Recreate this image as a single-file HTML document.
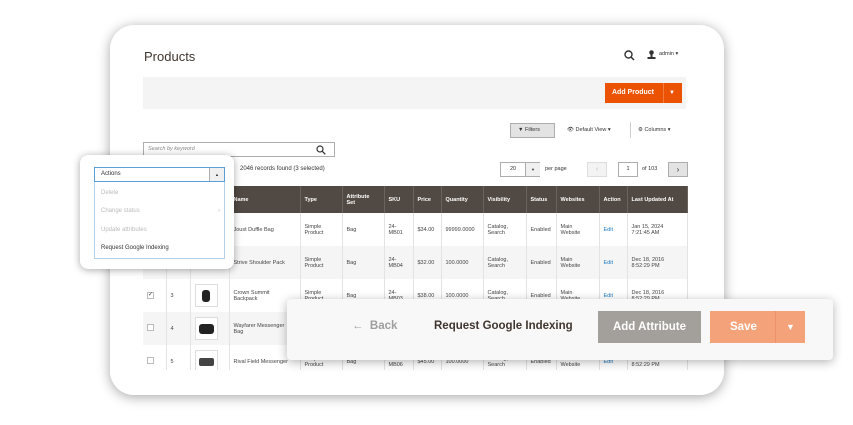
<!DOCTYPE html>
<html><head><meta charset="utf-8"><style>
*{box-sizing:border-box;margin:0;padding:0}
body{width:853px;height:425px;background:#fff;position:relative;overflow:hidden;font-family:"Liberation Sans",sans-serif;color:#333}
.abs{position:absolute}
.card{left:110px;top:25px;width:614px;height:370px;border-radius:24px;background:#fff;box-shadow:0 2px 12px rgba(0,0,0,.35);overflow:hidden}
table{border-collapse:collapse;position:absolute;left:143px;top:186px;font-size:5.5px;color:#444}
td,th{border-right:1px solid #e3e3e3;padding:0 4px;text-align:left;vertical-align:middle}
th{background:#514943;color:#fff;height:27px;font-weight:bold;border-right:1px solid #6a625c}
tr.r td{height:33px}
tr.r:nth-child(odd) td{background:#f5f5f5}
.cb{width:7px;height:7px;border:1px solid #bbb;background:#fff;display:inline-block}
.th{width:23px;height:23px;border:1px solid #ddd;background:#fff;display:flex;align-items:center;justify-content:center}
.ed{color:#1979c3}
</style></head><body>
<div class="abs card"></div>
<div class="abs" style="left:144px;top:49px;font-size:13px;color:#41362f">Products</div>
<svg class="abs" style="left:624px;top:50px" width="11" height="11"><circle cx="4.5" cy="4.5" r="3.5" stroke="#333" stroke-width="1.4" fill="none"/><path d="M7 7l3 3" stroke="#333" stroke-width="1.5"/></svg>
<svg class="abs" style="left:647px;top:50px" width="9" height="9"><circle cx="4.5" cy="2.5" r="2.3" fill="#333"/><rect x="3.5" y="4" width="2" height="3" fill="#333"/><rect x="0.5" y="7" width="8" height="2" fill="#333"/></svg>
<div class="abs" style="left:659px;top:51px;font-size:5.5px">admin ▾</div>
<div class="abs" style="left:143px;top:77px;width:543px;height:32px;background:#f4f4f4"></div>
<div class="abs" style="left:605px;top:83px;width:77px;height:20px;background:#eb5202;color:#fff;font-size:7px;font-weight:bold;line-height:20px;padding-left:7px">Add Product<span style="position:absolute;left:58px;top:0;width:1px;height:20px;background:#f47a3e"></span><span style="position:absolute;left:64px;font-size:6px">▼</span></div>
<div class="abs" style="left:510px;top:123px;width:45px;height:15px;background:#e3e3e3;border:1px solid #adadad;font-size:5.5px;line-height:13px;padding-left:7px">▼ Filters</div>
<div class="abs" style="left:567px;top:127px;font-size:5.5px">👁 Default View ▾</div>
<div class="abs" style="left:630px;top:122px;width:1px;height:16px;background:#ccc"></div>
<div class="abs" style="left:638px;top:127px;font-size:5.5px">⚙ Columns ▾</div>
<div class="abs" style="left:143px;top:142px;width:192px;height:15px;border:1px solid #adadad;font-size:5.5px;font-style:italic;color:#888;line-height:13px;padding-left:4px">Search by keyword</div>
<svg class="abs" style="left:316px;top:145px" width="10" height="10"><circle cx="4" cy="4" r="3" stroke="#333" stroke-width="1.2" fill="none"/><path d="M6.3 6.3l3 3" stroke="#333" stroke-width="1.3"/></svg>
<div class="abs" style="left:240px;top:166px;font-size:6px">2046 records found (3 selected)</div>
<div class="abs" style="left:500px;top:162px;width:40px;height:15px;border:1px solid #adadad;font-size:5.5px;line-height:13px;padding-left:9px;background:#fff">20<span style="position:absolute;left:24px;top:0;width:15px;height:13px;border-left:1px solid #adadad;text-align:center;background:#f0f0f0;font-size:4px">▼</span></div>
<div class="abs" style="left:545px;top:166px;font-size:5.5px">per page</div>
<div class="abs" style="left:587px;top:162px;width:20px;height:15px;border:1px solid #ddd;background:#f3f3f3;color:#bbb;font-size:7px;text-align:center;line-height:13px">‹</div>
<div class="abs" style="left:618px;top:162px;width:20px;height:15px;border:1px solid #adadad;font-size:5.5px;text-align:center;line-height:13px">1</div>
<div class="abs" style="left:642px;top:166px;font-size:5.5px">of 103</div>
<div class="abs" style="left:668px;top:162px;width:20px;height:15px;border:1px solid #adadad;background:#e3e3e3;font-size:8px;text-align:center;line-height:13px">›</div>
<table>
<tr><th style="width:23px"></th><th style="width:24px"></th><th style="width:39px"></th><th style="width:71px">Name</th><th style="width:42px">Type</th><th style="width:42px">Attribute<br>Set</th><th style="width:29px">SKU</th><th style="width:28px">Price</th><th style="width:42px">Quantity</th><th style="width:43px">Visibility</th><th style="width:30px">Status</th><th style="width:43px">Websites</th><th style="width:28px">Action</th><th style="width:60px">Last Updated At</th></tr>
<tr class="r"><td><span class="cb"></span></td><td>1</td><td></td><td>Joust Duffle Bag</td><td>Simple<br>Product</td><td>Bag</td><td>24-<br>MB01</td><td>$34.00</td><td>99999.0000</td><td>Catalog,<br>Search</td><td>Enabled</td><td>Main<br>Website</td><td class="ed">Edit</td><td>Jan 15, 2024<br>7:21:45 AM</td></tr>
<tr class="r"><td><span class="cb"></span></td><td>2</td><td></td><td>Strive Shoulder Pack</td><td>Simple<br>Product</td><td>Bag</td><td>24-<br>MB04</td><td>$32.00</td><td>100.0000</td><td>Catalog,<br>Search</td><td>Enabled</td><td>Main<br>Website</td><td class="ed">Edit</td><td>Dec 18, 2016<br>8:52:29 PM</td></tr>
<tr class="r"><td><span class="cb" style="font-size:6px;line-height:5px">✓</span></td><td>3</td><td><div class="th"><div style="width:8px;height:12px;background:#222;border-radius:3px"></div></div></td><td>Crown Summit<br>Backpack</td><td>Simple<br>Product</td><td>Bag</td><td>24-<br>MB03</td><td>$38.00</td><td>100.0000</td><td>Catalog,<br>Search</td><td>Enabled</td><td>Main<br>Website</td><td class="ed">Edit</td><td>Dec 18, 2016<br>8:52:29 PM</td></tr>
<tr class="r"><td><span class="cb"></span></td><td>4</td><td><div class="th"><div style="width:15px;height:10px;background:#222;border-radius:3px"></div></div></td><td>Wayfarer Messenger<br>Bag</td><td>Simple<br>Product</td><td>Bag</td><td>24-<br>MB05</td><td>$45.00</td><td>100.0000</td><td>Catalog,<br>Search</td><td>Enabled</td><td>Main<br>Website</td><td class="ed">Edit</td><td>Dec 18, 2016<br>8:52:29 PM</td></tr>
<tr class="r"><td><span class="cb"></span></td><td>5</td><td><div class="th"><div style="width:15px;height:8px;background:#444;border-radius:2px"></div></div></td><td>Rival Field Messenger</td><td>Simple<br>Product</td><td>Bag</td><td>24-<br>MB06</td><td>$45.00</td><td>100.0000</td><td>Catalog,<br>Search</td><td>Enabled</td><td>Main<br>Website</td><td class="ed">Edit</td><td>Dec 18, 2016<br>8:52:29 PM</td></tr>
</table>
<div class="abs" style="left:110px;top:370px;width:614px;height:25px;background:#fff;border-radius:0 0 24px 24px"></div>
<div class="abs" style="left:80px;top:155px;width:154px;height:114px;background:#fff;border-radius:8px;box-shadow:0 1px 8px rgba(0,0,0,.35)"></div>
<div class="abs" style="left:94px;top:167px;width:131px;height:15px;border:1px solid #5a9fd6;font-size:6px;line-height:13px;padding-left:6px">Actions<span style="position:absolute;right:0;top:0;width:15px;height:13px;border-left:1px solid #adadad;background:#f0f0f0;font-size:4px;text-align:center">▲</span></div>
<div class="abs" style="left:94px;top:182px;width:131px;height:77px;border:1px solid #b5d1ea;border-top:none;font-size:6px;color:#bbb">
<div style="position:absolute;left:6px;top:8px">Delete</div>
<div style="position:absolute;left:6px;top:26px">Change status</div><div style="position:absolute;right:4px;top:26px">›</div>
<div style="position:absolute;left:6px;top:45px">Update attributes</div>
<div style="position:absolute;left:6px;top:63px;color:#333">Request Google Indexing</div>
</div>
<div class="abs" style="left:287px;top:299px;width:546px;height:61px;background:#f8f8f8;border-radius:4px;box-shadow:0 2px 10px rgba(0,0,0,.3)"></div>
<div class="abs" style="left:352px;top:320px;font-size:11.5px;font-weight:bold;color:#9e9e9e">←&nbsp; Back</div>
<div class="abs" style="left:434px;top:320px;font-size:11.5px;font-weight:bold;color:#41362f">Request Google Indexing</div>
<div class="abs" style="left:598px;top:311px;width:103px;height:32px;background:#a39f9a;color:#fff;font-size:11.5px;font-weight:bold;text-align:center;line-height:32px">Add Attribute</div>
<div class="abs" style="left:710px;top:311px;width:95px;height:32px;background:#f4a279;color:#fff;font-size:11.5px;font-weight:bold;line-height:32px"><span style="position:absolute;left:20px">Save</span><span style="position:absolute;left:65px;top:0;width:1px;height:32px;background:#ee9168"></span><span style="position:absolute;left:76px;font-size:9px">▼</span></div>
</body></html>
